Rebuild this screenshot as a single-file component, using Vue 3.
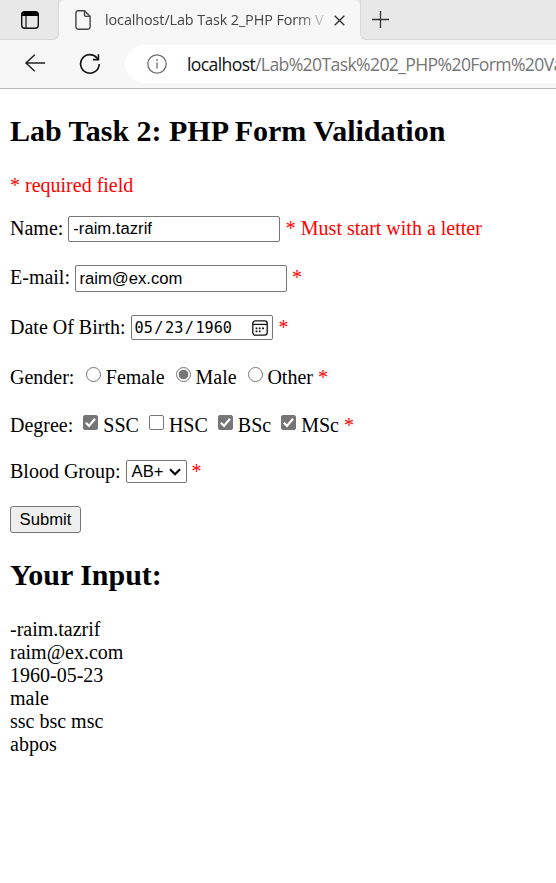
<script setup>
import { ref } from 'vue'

const name = ref('-raim.tazrif')
const email = ref('raim@ex.com')
const genders = ['Female', 'Male', 'Other']
const gender = ref('Male')
const degrees = ref([
  { label: 'SSC', on: true },
  { label: 'HSC', on: false },
  { label: 'BSc', on: true },
  { label: 'MSc', on: true },
])
const output = ['-raim.tazrif', 'raim@ex.com', '1960-05-23', 'male', 'ssc bsc msc', 'abpos']
</script>

<template>
  <div class="window">
    <header class="chrome">
      <div class="tabs">
        <div class="tabs-left">
          <svg width="20" height="20" viewBox="0 0 20 20" fill="none">
            <rect x="1.7" y="1.7" width="16.6" height="16.6" rx="3" stroke="#111" stroke-width="1.4" />
            <path d="M1.5 6V4.5a3 3 0 0 1 3-3h11a3 3 0 0 1 3 3V6z" fill="#000" />
            <path d="M6 6v12" stroke="#111" stroke-width="1.2" />
          </svg>
        </div>
        <div class="tab-slot">
          <div class="tab">
            <svg class="doc" width="16" height="20" viewBox="0 0 16 20" fill="none" stroke="#444" stroke-width="1.4" stroke-linejoin="round">
              <path d="M9.5.8H3A2.1 2.1 0 0 0 .9 2.9v14.2A2.1 2.1 0 0 0 3 19.2h10a2.1 2.1 0 0 0 2.1-2.1V6.4z" />
              <path d="M9.5.8v4.1a1.5 1.5 0 0 0 1.5 1.5h4.1" />
            </svg>
            <span class="title">localhost/Lab Task 2_PHP Form V</span>
            <svg class="close" width="11" height="11" viewBox="0 0 11 11" stroke="#333" stroke-width="1.4"><path d="M.7.7l9.6 9.6M10.3.7L.7 10.3" /></svg>
          </div>
        </div>
        <div class="tabs-right">
          <svg width="18" height="18" viewBox="0 0 18 18" stroke="#333" stroke-width="1.3"><path d="M8.5 0v17M0 8.5h17" /></svg>
        </div>
      </div>
      <div class="toolbar">
        <svg class="back" width="21" height="18" viewBox="0 0 21 18" fill="none" stroke="#222" stroke-width="1.5" stroke-linejoin="round"><path d="M9.8.8L.9 9l8.9 8.2M.9 9H20" /></svg>
        <svg class="reload" width="22" height="22" viewBox="0 0 22 22" fill="none" stroke="#111" stroke-width="1.6"><path d="M20.2 11a9.3 9.3 0 1 1-2.2-6.1L19.2 6.3" /><path d="M19.4 1.2v5.4H14" /></svg>
        <div class="address">
          <svg width="20" height="20" viewBox="0 0 20 20" fill="none" stroke="#707070" stroke-width="1.3"><circle cx="10" cy="10" r="9.2" /><path d="M10 8.6v6" /><circle cx="10" cy="6" r=".5" fill="#707070" stroke-width=".9" /></svg>
          <span class="url"><b>localhost</b>/Lab%20Task%202_PHP%20Form%20Va</span>
        </div>
      </div>
    </header>

    <main class="page">
      <h2>Lab Task 2: PHP Form Validation</h2>
      <p class="note red">* required field</p>
      <form @submit.prevent>
        <div class="row name">
          <label>Name:</label>
          <input v-model="name" class="text" type="text" />
          <span class="red">* Must start with a letter</span>
        </div>
        <div class="row email">
          <label>E-mail:</label>
          <input v-model="email" class="text" type="text" />
          <span class="red">*</span>
        </div>
        <div class="row dob">
          <label>Date Of Birth:</label>
          <div class="date">
            <span>05</span><i>/</i><span>23</span><i>/</i><span>1960</span>
            <svg width="16" height="16" viewBox="0 0 16 16" fill="none" stroke="#111">
              <rect x=".8" y=".8" width="14.4" height="14.4" rx="2.6" stroke-width="1.3" />
              <path d="M1 4.4h14" stroke-width="1.2" />
              <path d="M3.6 11.3h1.8M6.8 11.3h1.8M3.6 8.3h1.8M6.8 8.3h1.8M10.2 8.3H12" stroke-width="1.7" />
            </svg>
          </div>
          <span class="red">*</span>
        </div>
        <div class="row gender">
          <label>Gender:</label>
          <label v-for="g in genders" :key="g" class="option">
            <input v-model="gender" type="radio" name="gender" :value="g" />{{ g }}
          </label>
          <span class="red">*</span>
        </div>
        <div class="row degree">
          <label>Degree:</label>
          <label v-for="d in degrees" :key="d.label" class="option">
            <input v-model="d.on" type="checkbox" />
            <svg v-if="d.on" class="tick" width="15" height="15" viewBox="0 0 15 15" fill="none" stroke="#fff" stroke-width="2.2"><path d="M2.8 7.8l3.2 3.1 6-7.2" /></svg>{{ d.label }}
          </label>
          <span class="red">*</span>
        </div>
        <div class="row blood">
          <label>Blood Group:</label>
          <div class="select">
            <span>AB+</span>
            <svg width="12" height="8" viewBox="0 0 12 8" fill="none" stroke="#000" stroke-width="2.1"><path d="M1 1.2l5 5 5-5" /></svg>
          </div>
          <span class="red">*</span>
        </div>
        <button type="submit">Submit</button>
      </form>
      <h2>Your Input:</h2>
      <div class="output">
        <div v-for="line in output" :key="line">{{ line }}</div>
      </div>
    </main>
  </div>
</template>

<style>
body { margin: 0; background: #fff; overflow: hidden; }
</style>

<style scoped>
* { box-sizing: border-box; }
svg { display: block; flex: none; }
.window { width: 556px; height: 883px; overflow: hidden; background: #fff; }
.chrome { height: 89px; background: #f7f7f7; border-bottom: 1px solid #b9b9b9; font-family: "Open Sans", "Noto Sans", sans-serif; }
.tabs { display: flex; height: 40px; background: #f7f7f7; }
.tabs-left { width: 59px; height: 40px; padding: 10px 0 0 20px; background: #e8e8e8; border-right: 1px solid #d9d9d9; border-bottom: 1px solid #d6d6d6; border-bottom-right-radius: 6px; }
.tab-slot { width: 301px; background: linear-gradient(#e8e8e8 8px, #f7f7f7 8px); }
.tab { height: 40px; display: flex; background: #f7f7f7; border-radius: 6px 6px 0 0; }
.doc { margin: 10px 0 0 16px; }
.title { width: 224px; margin: 10px 0 0 14px; font-size: 14.4px; line-height: 20px; letter-spacing: -0.1px; white-space: nowrap; overflow: hidden; color: #444; -webkit-mask-image: linear-gradient(90deg, #000 192px, transparent 226px); mask-image: linear-gradient(90deg, #000 192px, transparent 226px); }
.close { margin: 15px 0 0 5px; }
.tabs-right { flex: 1; height: 40px; padding: 11px 0 0 11px; background: #e8e8e8; border-left: 1px solid #d9d9d9; border-bottom: 1px solid #d6d6d6; border-bottom-left-radius: 6px; }
.toolbar { display: flex; height: 48px; }
.back { margin: 14px 0 0 25px; }
.reload { margin: 13px 0 0 33px; }
.address { display: flex; flex: 1; min-width: 0; height: 38px; margin: 5px 0 0 24px; padding: 9px 0 0 22px; background: #fff; border-radius: 19px 0 0 19px; overflow: hidden; }
.url { margin: -2px 0 0 20px; font-size: 17.6px; line-height: 24px; letter-spacing: -0.63px; white-space: nowrap; color: #767676; }
.url b { font-weight: 400; color: #111; }

.page { padding: 25px 10px 0; font: 20px/23px "Liberation Serif", serif; color: #000; }
h2 { margin: 0; height: 34px; font-size: 30px; line-height: 34px; letter-spacing: -0.02px; white-space: nowrap; }
.note { margin: 26px 0 19px; }
.red { color: #f00; }
.row { display: flex; align-items: flex-start; height: 23px; line-height: 25px; white-space: nowrap; }
.name { margin-bottom: 26px; }
.email, .dob { margin-bottom: 27px; }
.gender { margin-bottom: 25px; }
.degree { margin-bottom: 23px; }
.blood { margin-bottom: 24px; }
.row > .red { margin-left: 5px; }
.name > .red { margin-left: 5.5px; }
.dob > .red { margin-left: 6px; }
.text { appearance: none; width: 212px; height: 26px; margin: 0 0 0 5px; padding: 0 4px; border: 1px solid #767676; border-radius: 2px; background: #fff; font: 16.67px "Liberation Sans", sans-serif; color: #000; outline: none; }
.email .text { height: 27px; padding-left: 3.5px; }
.date { display: flex; width: 142px; height: 25px; margin-left: 5px; padding: 0 4px 0 3px; border: 1px solid #767676; border-radius: 2px; font: 15.2px/24px "DejaVu Sans Mono", monospace; }
.date i { font-style: normal; margin: 0 1.5px; }
.date svg { margin: 4px 0 0 auto; }
.option { display: flex; }
.gender .option { margin-left: 11px; }
.gender .option:nth-child(2) { margin-left: 11.6px; }
.degree .option { margin-left: 10px; }
.option input { appearance: none; flex: none; width: 15px; height: 15px; margin: 2px 5px 0 0; border: 1px solid #767676; background: #fff; }
.option input[type="radio"] { border-radius: 50%; margin-right: 4.8px; }
.option input[type="radio"]:checked { background: radial-gradient(circle, #767676 0 4.4px, #fff 5.2px); }
.option input[type="checkbox"] { border-radius: 2px; }
.option input[type="checkbox"]:checked { background: #767676; }
.tick { margin: 2px 5px 0 -20px; }
.select { display: flex; width: 61px; height: 23px; margin: 1px 0 0 5px; padding: 0 5px; border: 1px solid #767676; border-radius: 2px; font: 16.67px/21px "Liberation Sans", sans-serif; }
.select svg { margin: 7px 0 0 auto; }
button { display: block; width: 71px; height: 27px; margin: 0 0 25px; padding: 0; border: 1px solid #767676; border-radius: 3px; background: #efefef; font: 16.67px "Liberation Sans", sans-serif; color: #000; }
.output { margin-top: 26px; }
</style>
